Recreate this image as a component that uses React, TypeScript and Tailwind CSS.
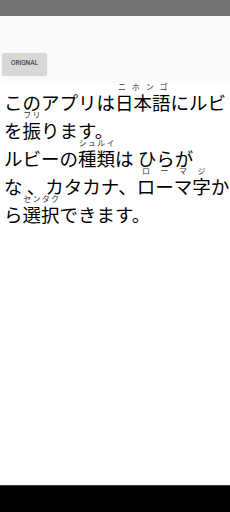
import React from "react";

const R = ({ b, t }: { b: string; t: string }) => (
  <span className="relative inline-block">
    {b}
    <span className="absolute left-0 right-0 top-[-6px] flex justify-around text-[8px] leading-[9px] text-[#333]">
      {t.split("").map((c, i) => (
        <span key={i}>{c}</span>
      ))}
    </span>
  </span>
);

export default function App() {
  return (
    <div
      className="w-[230px] h-[512px] flex flex-col bg-white overflow-hidden"
      style={{ fontFamily: '"Noto Sans CJK JP", "Noto Sans", sans-serif' }}
    >
      <div className="h-[16px] bg-[#737373] shrink-0" />
      <div className="h-[67px] bg-[#fafafa] shrink-0 flex items-end px-[2px] pb-[8px]">
        <div
          className="w-[45px] h-[22px] bg-[#d6d7d7] rounded-[2px] flex items-center justify-center text-[6.5px] text-[#222] shadow-[0_1px_1px_rgba(0,0,0,0.15)]"
          style={{ fontFamily: 'Roboto, "Liberation Sans", sans-serif' }}
        >
          ORIGNAL
        </div>
      </div>
      <div className="flex-1 px-[4px] pt-[5px] text-[18.5px] text-black whitespace-nowrap flex flex-col">
        <div className="h-[28px] leading-[28px]">
          このアプリは<R b="日本語" t="ニホンゴ" />にルビ
        </div>
        <div className="h-[28px] leading-[28px]">
          を<R b="振" t="フリ" />ります。
        </div>
        <div className="h-[28px] leading-[28px]">
          ルビーの<R b="種類" t="シュルイ" />は ひらが
        </div>
        <div className="h-[28px] leading-[28px]">
          な 、カタカナ、<R b="ローマ字" t="ローマジ" />か
        </div>
        <div className="h-[28px] leading-[28px]">
          ら<R b="選択" t="センタク" />できます。
        </div>
      </div>
      <div className="h-[27px] shrink-0 bg-black border-t border-[#3a3a3a]" />
    </div>
  );
}
